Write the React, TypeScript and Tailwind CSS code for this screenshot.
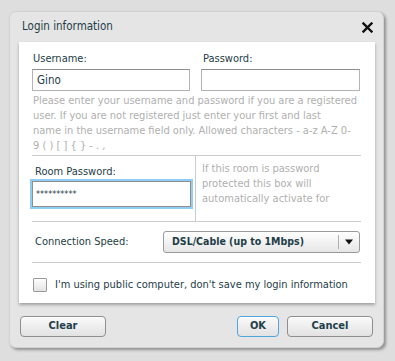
import React, { useState } from 'react';

const font = { fontFamily: '"DejaVu Sans Condensed", "DejaVu Sans", sans-serif' };

function Divider() {
  return <div className="h-px bg-[#c9cdcd] mr-[14px]" />;
}

function DialogButton({ label, primary, className }: { label: string; primary?: boolean; className: string }) {
  return (
    <button
      className={
        'h-[21px] rounded-[4px] border text-[11px] font-bold text-[#23404a] bg-gradient-to-b from-[#fafafa] to-[#e2e2e2] shadow-[inset_0_1px_0_#fff] ' +
        (primary ? 'border-[#4da6e0]' : 'border-[#8e8e8e]') +
        ' ' +
        className
      }
    >
      {label}
    </button>
  );
}

export default function App() {
  const [username, setUsername] = useState('Gino');
  const [password, setPassword] = useState('');
  const [roomPassword, setRoomPassword] = useState('**********');
  const [publicComputer, setPublicComputer] = useState(false);

  return (
    <div className="w-[395px] h-[361px] bg-[#dedede] pt-[11px] pl-[9px]" style={font}>
      <div className="w-[375px] h-[337px] rounded-[7px] bg-[#e5e5e5] border border-[#d2d2d2] shadow-[2px_2px_3px_rgba(0,0,0,0.35)]">
        <div className="h-[30px] flex items-center justify-between pl-[12px] pr-[10px]">
          <span className="text-[11.5px] text-[#1e3d47]">Login information</span>
          <svg width="11" height="11" viewBox="0 0 11 11">
            <path d="M1.5 1.5 L9.5 9.5 M9.5 1.5 L1.5 9.5" stroke="#111" strokeWidth="2.4" strokeLinecap="square" />
          </svg>
        </div>

        <div className="ml-[9px] w-[356px] h-[261px] bg-white shadow-[0_2px_3px_rgba(0,0,0,0.3)] pl-[13px] pt-[10px] text-[11px]">
          <div className="flex gap-[11px]">
            <div className="flex flex-col">
              <label className="h-[17px] leading-[14px] text-[#1e3d47] pl-[1px]">Username:</label>
              <input
                value={username}
                onChange={(e) => setUsername(e.target.value)}
                className="w-[158px] h-[22px] border border-[#b4b4b4] border-t-[#8f8f8f] px-[4px] text-[11.5px] text-[#1e3d47] outline-none"
              />
            </div>
            <div className="flex flex-col">
              <label className="h-[17px] leading-[14px] text-[#1e3d47] pl-[2px]">Password:</label>
              <input
                type="password"
                value={password}
                onChange={(e) => setPassword(e.target.value)}
                className="w-[159px] h-[22px] border border-[#b4b4b4] border-t-[#8f8f8f] px-[4px] text-[12px] outline-none"
              />
            </div>
          </div>

          <p className="mt-[2px] mb-[2px] leading-[15px] text-[#b0b0b0] pl-[1px] pr-[14px] whitespace-nowrap">
            Please enter your username and password if you are a registered
            <br />
            user. If you are not registered just enter your first and last
            <br />
            name in the username field only. Allowed characters - a-z A-Z 0-
            <br />9 ( ) [ ] {'{'} {'}'} - . ,
          </p>

          <Divider />

          <div className="flex h-[65px] mr-[14px]">
            <div className="w-[164px] border-r border-[#c9cdcd] pt-[9px]">
              <label className="block h-[16px] leading-[14px] text-[#1e3d47] pl-[3px]">Room Password:</label>
              <input
                value={roomPassword}
                onChange={(e) => setRoomPassword(e.target.value)}
                className="w-[159px] h-[26px] border border-[#8f8f8f] px-[3px] text-[9px] text-[#1e3d47] outline-none shadow-[0_0_0_2px_#8fcdf4]"
              />
            </div>
            <p className="pl-[6px] pt-[5px] leading-[15px] text-[#b0b0b0]">
              If this room is password
              <br />
              protected this box will
              <br />
              automatically activate for
            </p>
          </div>

          <Divider />

          <div className="flex items-center h-[40px] mr-[14px]">
            <span className="w-[131px] pl-[3px] text-[#1e3d47]">Connection Speed:</span>
            <div className="flex items-center w-[197px] h-[22px] rounded-[3px] border border-[#9a9a9a] bg-gradient-to-b from-[#ffffff] to-[#e6e6e6]">
              <span className="flex-1 pl-[8px] text-[10.5px] font-bold text-[#1e3d47]">DSL/Cable (up to 1Mbps)</span>
              <div className="w-px h-[14px] bg-[#b0b0b0]" />
              <svg width="20" height="10" viewBox="0 0 20 10">
                <path d="M6 2.5 L14 2.5 L10 7.5 Z" fill="#111" />
              </svg>
            </div>
          </div>

          <Divider />

          <label className="flex items-center gap-[8px] mt-[14px] pl-[1px] cursor-pointer">
            <input
              type="checkbox"
              checked={publicComputer}
              onChange={(e) => setPublicComputer(e.target.checked)}
              className="sr-only"
            />
            <span className="w-[14px] h-[14px] border border-[#9a9a9a] rounded-[1px] bg-gradient-to-b from-[#fdfdfd] to-[#e4e4e4]" />
            <span className="text-[#1e3d47]">I'm using public computer, don't save my login information</span>
          </label>
        </div>

        <div className="flex mt-[13px] px-[10px]">
          <DialogButton label="Clear" className="w-[86px]" />
          <div className="flex-1" />
          <DialogButton label="OK" primary className="w-[42px]" />
          <DialogButton label="Cancel" className="w-[86px] ml-[8px]" />
        </div>
      </div>
    </div>
  );
}
